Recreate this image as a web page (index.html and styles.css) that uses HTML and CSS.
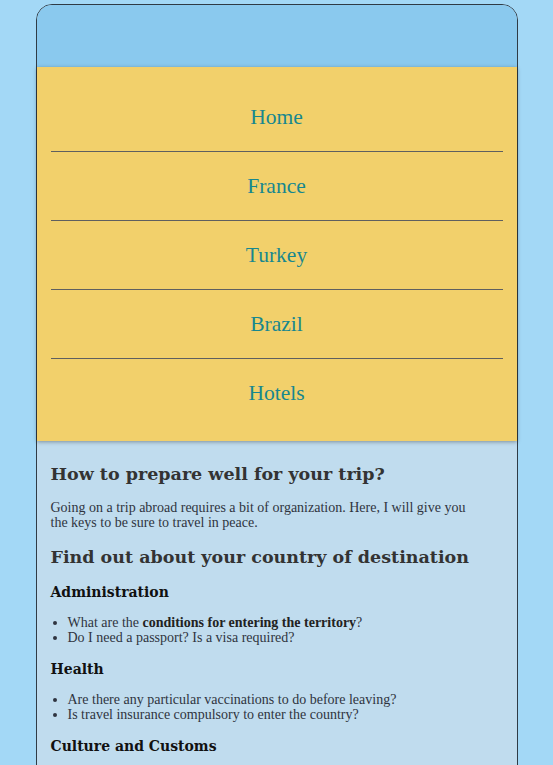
FILE: index.html
```html
<!DOCTYPE html>
<html lang="en">
<head>
<meta charset="utf-8">
<title>Travel</title>
<link rel="stylesheet" href="styles.css">
</head>
<body>
<div class="page">
  <header class="top"></header>
  <nav class="menu">
    <a class="menu-item" href="#">Home</a>
    <a class="menu-item" href="#">France</a>
    <a class="menu-item" href="#">Turkey</a>
    <a class="menu-item" href="#">Brazil</a>
    <a class="menu-item" href="#">Hotels</a>
  </nav>
  <main class="content">
    <h2 class="title">How to prepare well for your trip?</h2>
    <p class="text">Going on a trip abroad requires a bit of organization. Here, I will give you the keys to be sure to travel in peace.</p>
    <h2 class="title">Find out about your country of destination</h2>
    <h3 class="sub">Administration</h3>
    <ul class="list">
      <li>What are the <strong>conditions for entering the territory</strong>?</li>
      <li>Do I need a passport? Is a visa required?</li>
    </ul>
    <h3 class="sub">Health</h3>
    <ul class="list">
      <li>Are there any particular vaccinations to do before leaving?</li>
      <li>Is travel insurance compulsory to enter the country?</li>
    </ul>
    <h3 class="sub">Culture and Customs</h3>
    <ul class="list">
      <li>What are the local customs to respect?</li>
      <li>Which language is spoken?</li>
    </ul>
  </main>
</div>
</body>
</html>
```
FILE: styles.css
```css
html, body {
  margin: 0;
  padding: 0;
  background: #a3d8f6;
  font-family: "Liberation Serif", Georgia, serif;
}
.page {
  width: 480px;
  margin: 4px auto 0;
  border: 1px solid #2f3b45;
  border-radius: 16px 16px 0 0;
  background: #c0dcee;
}
.top {
  height: 62px;
  background: #8ac9ee;
  border-radius: 15px 15px 0 0;
}
.menu {
  background: #f2d06b;
  padding: 16px 14px 14px;
  display: flex;
  flex-direction: column;
  box-shadow: 0 1px 4px rgba(0,0,0,0.35);
  position: relative;
}
.menu-item {
  height: 68px;
  display: flex;
  align-items: center;
  justify-content: center;
  color: #17878f;
  text-decoration: none;
  font-size: 21.5px;
  border-bottom: 1px solid #5f5f5f;
}
.menu-item:last-child {
  border-bottom: none;
}
.content {
  padding: 21px 40px 20px 14px;
  color: #333;
}
.title {
  font-family: "DejaVu Serif", Georgia, serif;
  font-size: 17.5px;
  line-height: 24px;
  font-weight: bold;
  margin: 0;
  color: #333;
  white-space: nowrap;
}
.text {
  font-size: 14px;
  line-height: 15px;
  margin: 13.5px 0 15.5px;
  color: #2f3440;
}
.sub {
  font-family: "DejaVu Serif", Georgia, serif;
  font-size: 14px;
  line-height: 19px;
  font-weight: bold;
  margin: 13.5px 0 13px;
  color: #111;
}
.list {
  margin: 0 0 15px;
  padding-left: 17px;
  font-size: 14px;
  line-height: 15px;
  color: #2f3440;
}
.list strong {
  color: #222;
}
```
